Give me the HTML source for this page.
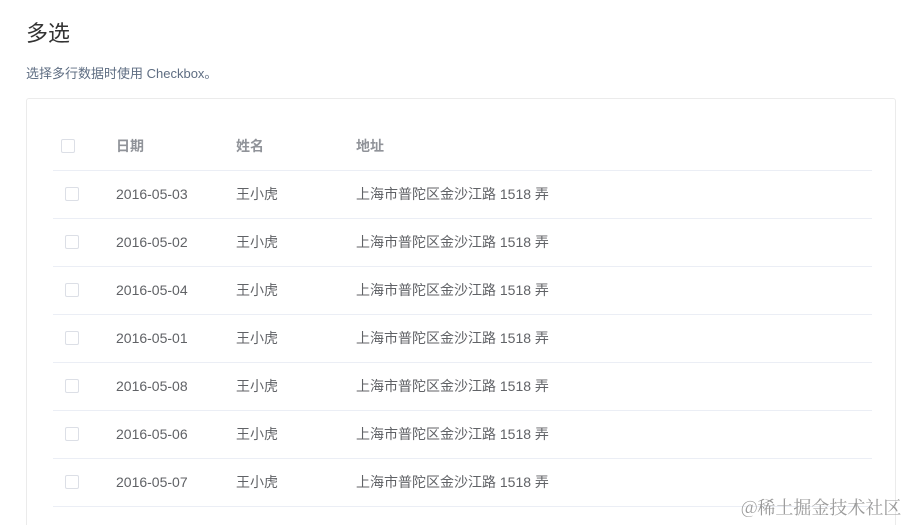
<html style="overflow:hidden"><head><style>
html,body{margin:0;width:908px;height:525px;overflow:hidden;background:#fff;font-family:"Liberation Sans","Noto Sans CJK SC",sans-serif;position:relative}
.t{position:absolute;left:26px;top:16px;font-size:22px;color:#333}
.s{position:absolute;left:26px;top:65px;font-size:13px;color:#5e6d82;line-height:18px}
.card{position:absolute;left:26px;top:98px;width:868px;height:440px;border:1px solid #ebebeb;border-radius:3px}
.row{position:absolute;left:53px;width:819px;height:48px;border-bottom:1px solid #ebeef5;font-size:14px;color:#606266}
.row span{position:absolute;top:15px;line-height:18px;height:18px}
.cb{position:absolute;width:12px;height:12px;border:1px solid #dcdfe6;border-radius:2px;top:17px}
.h{color:#909399;font-weight:bold}
.wm{position:absolute;left:741px;top:495px;font-size:18px;color:#999;font-family:"Noto Serif CJK SC","Noto Sans CJK SC",serif;line-height:24px}
</style></head><body>
<div class="t">多选</div>
<div class="s">选择多行数据时使用 Checkbox。</div>
<div class="card"></div>
<div class="row h" style="top:122px"><div class="cb" style="left:8px;top:17px"></div><span style="left:63px">日期</span><span style="left:183px">姓名</span><span style="left:303px">地址</span></div>
<div class="row" style="top:170px"><div class="cb" style="left:12px"></div><span style="left:63px">2016-05-03</span><span style="left:183px">王小虎</span><span style="left:303px">上海市普陀区金沙江路 1518 弄</span></div>
<div class="row" style="top:218px"><div class="cb" style="left:12px"></div><span style="left:63px">2016-05-02</span><span style="left:183px">王小虎</span><span style="left:303px">上海市普陀区金沙江路 1518 弄</span></div>
<div class="row" style="top:266px"><div class="cb" style="left:12px"></div><span style="left:63px">2016-05-04</span><span style="left:183px">王小虎</span><span style="left:303px">上海市普陀区金沙江路 1518 弄</span></div>
<div class="row" style="top:314px"><div class="cb" style="left:12px"></div><span style="left:63px">2016-05-01</span><span style="left:183px">王小虎</span><span style="left:303px">上海市普陀区金沙江路 1518 弄</span></div>
<div class="row" style="top:362px"><div class="cb" style="left:12px"></div><span style="left:63px">2016-05-08</span><span style="left:183px">王小虎</span><span style="left:303px">上海市普陀区金沙江路 1518 弄</span></div>
<div class="row" style="top:410px"><div class="cb" style="left:12px"></div><span style="left:63px">2016-05-06</span><span style="left:183px">王小虎</span><span style="left:303px">上海市普陀区金沙江路 1518 弄</span></div>
<div class="row" style="top:458px"><div class="cb" style="left:12px"></div><span style="left:63px">2016-05-07</span><span style="left:183px">王小虎</span><span style="left:303px">上海市普陀区金沙江路 1518 弄</span></div>
<div class="wm">@稀土掘金技术社区</div>
</body></html>
